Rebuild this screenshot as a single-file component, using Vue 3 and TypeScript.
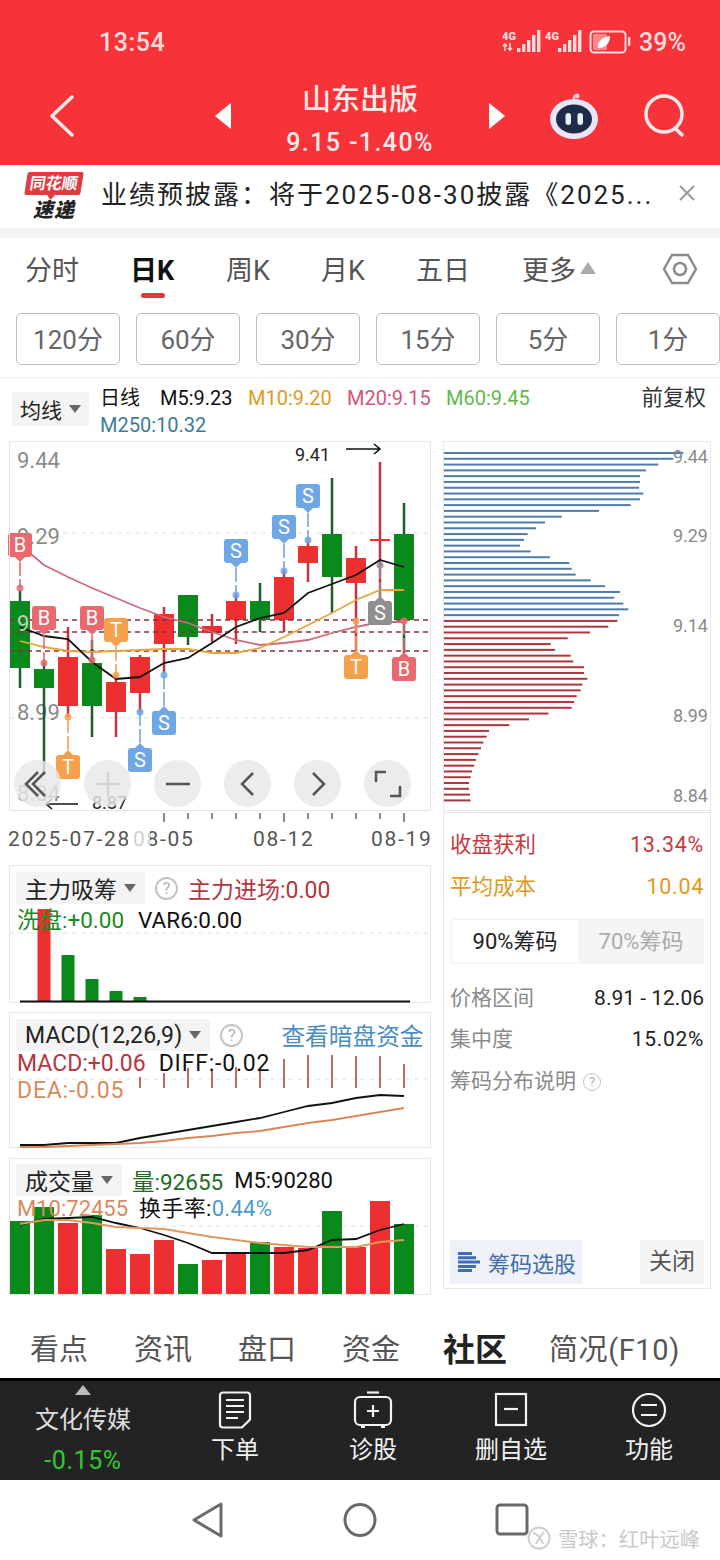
<template>
  <div class="page">
    <header class="top">
      <div class="status">
        <span class="clock">13:54</span>
        <svg class="status-icons" width="134" height="26" viewBox="502 29 134 26">
          <text x="502" y="40" class="net">4G</text>
          <path d="M505 44v7M503 46l2-2 2 2M510 43v7M508 48l2 2 2-2" stroke="#fbdcdc" stroke-width="1.6" fill="none" />
          <rect v-for="(h, i) in signal" :key="'a' + i" :x="517 + i * 5" :y="52 - h" width="3.4" :height="h" fill="#fbdcdc" />
          <text x="545" y="40" class="net">4G</text>
          <rect v-for="(h, i) in signal" :key="'b' + i" :x="558 + i * 5" :y="52 - h" width="3.4" :height="h" fill="#fbdcdc" />
          <rect x="590.5" y="31.5" width="35" height="21" rx="3.5" fill="none" stroke="#fbdcdc" stroke-width="2" />
          <rect x="593" y="34" width="14" height="16" rx="1.5" fill="#f58c8c" />
          <path d="M598 48c-1-7 5-11 12-12 0 8-5 12-12 12z" fill="#fff" />
          <rect x="628" y="37" width="2.4" height="9" rx="1" fill="#fbdcdc" />
        </svg>
        <span class="battery-text">39%</span>
      </div>
      <div class="nav">
        <svg class="back" width="30" height="44" viewBox="0 0 30 44"><path d="M25 3 5 22l20 19" fill="none" stroke="#fde9e9" stroke-width="3.5" stroke-linecap="round" stroke-linejoin="round" /></svg>
        <svg width="20" height="26" viewBox="0 0 20 26"><path d="M18 0v26L2 13z" fill="#fff" /></svg>
        <div class="title-box">
          <div class="title">山东出版</div>
          <div class="subtitle">9.15 -1.40%</div>
        </div>
        <svg width="20" height="26" viewBox="0 0 20 26"><path d="M2 0v26l16-13z" fill="#fff" /></svg>
        <div class="nav-right">
          <svg width="52" height="48" viewBox="0 0 52 48">
            <path d="M26 9C25 4 27 2 29 4" fill="none" stroke="#f6c8d8" stroke-width="2" />
            <circle cx="29" cy="4" r="2.5" fill="#f6c8d8" />
            <ellipse cx="26" cy="27" rx="24" ry="20" fill="#ece6fb" />
            <ellipse cx="26" cy="27" rx="18" ry="14.5" fill="#1e2b49" />
            <rect x="17.5" y="21" width="5.5" height="12" rx="2.7" fill="#e8eefc" />
            <rect x="29.5" y="21" width="5.5" height="12" rx="2.7" fill="#e8eefc" />
          </svg>
          <svg width="50" height="50" viewBox="0 0 50 50">
            <circle cx="24" cy="23" r="18" fill="none" stroke="#fde9e9" stroke-width="3.5" />
            <path d="M35 37l7 7" stroke="#fde9e9" stroke-width="3.5" stroke-linecap="round" />
          </svg>
        </div>
      </div>
    </header>

    <div class="notice">
      <div class="logo">
        <span class="logo-top">同花顺</span>
        <span class="logo-bottom">速递</span>
      </div>
      <span class="notice-text">业绩预披露：将于2025-08-30披露《2025...</span>
      <svg width="18" height="18" viewBox="0 0 18 18"><path d="M2 2l14 14M16 2 2 16" stroke="#9a9a9a" stroke-width="2" /></svg>
    </div>

    <nav class="periods">
      <span>分时</span>
      <span class="period-active">日K</span>
      <span>周K</span>
      <span>月K</span>
      <span>五日</span>
      <span class="more">更多<i class="tri-up"></i></span>
      <svg class="hex" width="34" height="32" viewBox="0 0 34 32">
        <path d="M9 2h16l8 14-8 14H9L1 16z" fill="none" stroke="#8a8a8a" stroke-width="2.5" stroke-linejoin="round" />
        <circle cx="17" cy="16" r="6" fill="none" stroke="#8a8a8a" stroke-width="2.5" />
      </svg>
    </nav>

    <div class="minutes">
      <span v-for="m in minutes" :key="m" class="minute">{{ m }}</span>
    </div>

    <div class="legend">
      <span class="select legend-select">均线<i class="tri-down"></i></span>
      <div class="legend-lines">
        <div class="legend-row">
          <span class="black legend-day">日线</span>
          <span class="black legend-m5">M5:9.23</span>
          <span class="m10">M10:9.20</span>
          <span class="m20">M20:9.15</span>
          <span class="m60">M60:9.45</span>
          <span class="fq">前复权</span>
        </div>
        <div class="m250">M250:10.32</div>
      </div>
    </div>

    <div class="charts">
      <div class="col-left">
        <div class="kline">
          <svg width="422" height="370" viewBox="9 441 422 370" class="block">
            <line x1="9" x2="431" y1="533" y2="533" class="grid" />
            <line x1="9" x2="431" y1="718" y2="718" class="grid" />
            <text v-for="l in yLabels" :key="l.t" x="17" :y="l.y" class="axis">{{ l.t }}</text>
            <g v-for="(c, i) in candles" :key="i">
              <line :x1="xAt(i)" :x2="xAt(i)" :y1="c.hi" :y2="c.lo" :stroke="wick(c.up)" stroke-width="2.5" />
              <rect :x="xAt(i) - 10" :y="c.open" width="20" :height="c.close - c.open" :fill="c.up ? RED : GREEN" />
            </g>
            <line v-for="y in [620, 632, 651]" :key="y" x1="9" x2="431" :y1="y" :y2="y" class="price-line" />
            <polyline :points="line(maPink, 440)" class="ma" stroke="#cf6a7e" />
            <polyline :points="line(maYellow, 440)" class="ma" stroke="#e8a53a" />
            <polyline :points="line(maBlack, 440)" class="ma" stroke="#111" />
            <text x="17" y="631" class="axis nine">9</text>
            <g v-for="(m, i) in marks" :key="'m' + i">
              <line :x1="m.x" :x2="m.x" :y1="m.y" :y2="m.dot" :stroke="m.color" stroke-width="2" stroke-dasharray="14 3" opacity="0.8" />
              <circle :cx="m.x" :cy="m.dot" r="3.5" :fill="m.color" opacity="0.85" />
              <rect :x="m.x - 12" :y="m.y - 12" width="24" height="24" rx="3" :fill="m.color" />
              <path :d="pointer(m)" :fill="m.color" />
              <text :x="m.x" :y="m.y + 7" class="mark-text">{{ m.t }}</text>
            </g>
            <text x="295" y="461" class="price-note">9.41</text>
            <path d="M346 449h34M374 444l6 5-6 5" class="arrow" />
            <text x="92" y="809" class="price-note">8.87</text>
            <path d="M78 804H45M52 799l-6 5 6 5" class="arrow" />
          </svg>
          <div class="kline-tools">
            <span class="tool"><svg width="30" height="30" viewBox="0 0 30 30"><path d="M15 3 3 15l12 12M22 3 10 15l12 12" class="tool-line" /></svg></span>
            <span class="tool"><svg width="30" height="30" viewBox="0 0 30 30"><path d="M15 3v24M3 15h24" class="tool-line pale" /></svg></span>
            <span class="tool"><svg width="30" height="30" viewBox="0 0 30 30"><path d="M3 15h24" class="tool-line" /></svg></span>
            <span class="tool"><svg width="30" height="30" viewBox="0 0 30 30"><path d="M20 4 9 15l11 11" class="tool-line" /></svg></span>
            <span class="tool"><svg width="30" height="30" viewBox="0 0 30 30"><path d="M10 4l11 11-11 11" class="tool-line" /></svg></span>
            <span class="tool"><svg width="30" height="30" viewBox="0 0 30 30"><path d="M3 13V3h10M27 17v10H17" class="tool-line" /></svg></span>
          </div>
        </div>

        <svg width="422" height="54" viewBox="9 811 422 54" class="block date-axis">
          <line v-for="x in dateTicks" :key="x" :x1="x" :x2="x" y1="813" :y2="x === 284 || x === 164 || x === 404 ? 822 : 819" stroke="#666" stroke-width="1.5" />
          <text x="8" y="846" class="date">2025-07-28</text>
          <text x="133" y="846" class="date">08-05</text>
          <rect x="128" y="812" width="22" height="40" fill="#fff" opacity="0.72" />
          <text x="253" y="846" class="date">08-12</text>
          <text x="371" y="846" class="date">08-19</text>
        </svg>

        <section class="sub sub-flow">
          <svg class="sub-svg" width="422" height="138" viewBox="9 865 422 138">
            <line x1="9" x2="431" y1="933" y2="933" class="grid" />
            <rect v-for="b in flowBars" :key="b.x" :x="b.x - 6.5" :y="b.y" width="13" :height="1001 - b.y" :fill="b.red ? RED : GREEN" />
            <line x1="20" x2="410" y1="1001.5" y2="1001.5" stroke="#111" stroke-width="2" />
          </svg>
          <div class="sub-head">
            <span class="select">主力吸筹<i class="tri-down"></i></span>
            <i class="help">?</i>
            <span class="c-red head-gap">主力进场:0.00</span>
          </div>
          <div class="sub-line line-flow">
            <span class="c-green">洗盘:+0.00</span>
            <span class="black var6">VAR6:0.00</span>
          </div>
        </section>

        <section class="sub sub-macd">
          <svg class="sub-svg" width="422" height="136" viewBox="9 1012 422 136">
            <line x1="9" x2="431" y1="1079" y2="1079" class="grid" />
            <line v-for="(t, i) in macdTops" :key="i" :x1="xAt(i + 5)" :x2="xAt(i + 5)" :y1="t" y2="1088" stroke="#b5404a" stroke-width="1.6" />
            <polyline :points="line(macdBlack, 0)" class="ma" stroke="#111" />
            <polyline :points="line(macdOrange, 0)" class="ma" stroke="#d9855a" />
          </svg>
          <div class="sub-head">
            <span class="select macd-select">MACD(12,26,9)<i class="tri-down"></i></span>
            <i class="help">?</i>
            <span class="dark-link">查看暗盘资金</span>
          </div>
          <div class="sub-line line-macd">
            <span class="c-red">MACD:+0.06</span>
            <span class="black diff">DIFF:-0.02</span>
          </div>
          <div class="sub-line line-dea"><span class="c-orange">DEA:-0.05</span></div>
        </section>

        <section class="sub sub-vol">
          <svg class="sub-svg" width="422" height="137" viewBox="9 1158 422 137">
            <line x1="9" x2="431" y1="1226" y2="1226" class="grid" />
            <rect v-for="(t, i) in volTops" :key="i" :x="xAt(i) - 10" :y="t" width="20" :height="1294 - t" :fill="candles[i].up ? RED : GREEN" />
            <polyline :points="line(volBlack, 0)" class="ma" stroke="#111" />
            <polyline :points="line(volOrange, 0)" class="ma" stroke="#e0995a" />
          </svg>
          <div class="sub-head">
            <span class="select">成交量<i class="tri-down"></i></span>
            <span class="c-dgreen vol-now">量:92655</span>
            <span class="black vol-m5">M5:90280</span>
          </div>
          <div class="sub-line line-vol">
            <span class="c-orange">M10:72455</span>
            <span class="black turnover">换手率:<em class="c-blue">0.44%</em></span>
          </div>
        </section>
      </div>

      <div class="col-right">
        <div class="chips">
          <svg width="268" height="370" viewBox="443 441 268 370" class="block">
            <rect v-for="(w, i) in chips" :key="i" x="443" :y="452 + i * 5.79" :width="w / 3 - 3" height="2" :fill="i < 29 ? '#4d7dab' : '#b0343d'" />
            <text v-for="l in chipLabels" :key="l.t" x="708" :y="l.y" class="axis chip-label">{{ l.t }}</text>
          </svg>
        </div>
        <div class="stats">
          <div class="stat-row stat-profit">
            <span class="c-profit">收盘获利</span><span class="c-profit wide">13.34%</span>
          </div>
          <div class="stat-row stat-cost">
            <span class="c-gold">平均成本</span><span class="c-gold wide">10.04</span>
          </div>
          <div class="chip-tabs">
            <span class="chip-tab chip-tab-on">90%筹码</span>
            <span class="chip-tab">70%筹码</span>
          </div>
          <div class="stat-row info first-info"><span class="muted">价格区间</span><span>8.91 - 12.06</span></div>
          <div class="stat-row info"><span class="muted">集中度</span><span class="wide">15.02%</span></div>
          <div class="stat-row info explain"><span class="muted">筹码分布说明<i class="help small">?</i></span></div>
          <div class="stat-actions">
            <span class="pick">
              <svg width="22" height="20" viewBox="0 0 22 20"><path d="M0 0h14v3H0zM0 4.3h18v3H0zM0 8.6h22v3H0zM0 12.9h18v3H0zM0 17h14v3H0z" fill="#3f6eb4" /></svg>
              筹码选股
            </span>
            <span class="close-btn">关闭</span>
          </div>
        </div>
      </div>
    </div>

    <nav class="bottom-tabs">
      <span>看点</span>
      <span>资讯</span>
      <span>盘口</span>
      <span>资金</span>
      <span class="tab-on">社区</span>
      <span class="tab-f10">简况(F10)</span>
    </nav>

    <div class="dock">
      <div class="dock-sector">
        <i class="sector-tri"></i>
        <span class="sector-name">文化传媒</span>
        <span class="sector-pct">-0.15%</span>
      </div>
      <div class="dock-item">
        <svg width="34" height="38" viewBox="0 0 34 38">
          <path d="M5 1.5h24a3 3 0 0 1 3 3v24l-8 8H5a3 3 0 0 1-3-3v-29a3 3 0 0 1 3-3z" class="dock-line" />
          <path d="M8 9h18M8 15h18M8 21h18M8 27h12" class="dock-line" />
        </svg>
        <span>下单</span>
      </div>
      <div class="dock-item">
        <svg width="40" height="38" viewBox="0 0 40 38">
          <path d="M14 1.5h12" class="dock-line" />
          <rect x="2" y="6" width="36" height="28" rx="5" class="dock-line" />
          <path d="M20 14v12M14 20h12M8 36h4M28 36h4" class="dock-line" />
        </svg>
        <span>诊股</span>
      </div>
      <div class="dock-item">
        <svg width="34" height="38" viewBox="0 0 34 38">
          <rect x="2" y="3" width="30" height="31" class="dock-line" />
          <path d="M10 18h14" class="dock-line" />
        </svg>
        <span>删自选</span>
      </div>
      <div class="dock-item">
        <svg width="36" height="38" viewBox="0 0 36 38">
          <circle cx="18" cy="19" r="16" class="dock-line" />
          <path d="M10 14h16M10 24h16" class="dock-line" />
        </svg>
        <span>功能</span>
      </div>
    </div>

    <div class="system-nav">
      <svg width="34" height="38" viewBox="0 0 34 38"><path d="M30 3 3 19l27 16z" class="sys-line" /></svg>
      <svg width="34" height="38" viewBox="0 0 34 38"><ellipse cx="17" cy="19" rx="15" ry="15.5" class="sys-line" /></svg>
      <svg width="34" height="38" viewBox="0 0 34 38"><rect x="2" y="4" width="30" height="29" rx="3" class="sys-line" /></svg>
    </div>

    <div class="watermark">
      <svg width="24" height="24" viewBox="0 0 24 24">
        <circle cx="12" cy="12" r="10.5" fill="none" stroke="#cfcfcf" stroke-width="2" />
        <path d="M6 7c5 1 8 6 10 11M17 6c-3 3-6 7-8 12" stroke="#cfcfcf" stroke-width="2" fill="none" />
      </svg>
      <span>雪球：红叶远峰</span>
    </div>
  </div>
</template>

<script setup lang="ts">
interface Candle {
  up: boolean
  open: number
  close: number
  hi: number
  lo: number
}

interface Mark {
  t: string
  x: number
  y: number
  dot: number
  color: string
}

const RED = '#ee2f2f'
const GREEN = '#0a8a1c'
const BUY = '#e8696f'
const SELL = '#6ea6e6'
const TAKE = '#f5a04c'

const signal = [4, 8, 12, 17, 22]
const minutes = ['120分', '60分', '30分', '15分', '5分', '1分']

const candles: Candle[] = [
  { up: false, open: 601, close: 668, hi: 590, lo: 688 },
  { up: false, open: 669, close: 688, hi: 660, lo: 775 },
  { up: true, open: 657, close: 706, hi: 627, lo: 717 },
  { up: false, open: 663, close: 706, hi: 640, lo: 737 },
  { up: true, open: 682, close: 712, hi: 675, lo: 737 },
  { up: true, open: 657, close: 693, hi: 655, lo: 712 },
  { up: true, open: 614, close: 644, hi: 607, lo: 673 },
  { up: false, open: 595, close: 637, hi: 595, lo: 645 },
  { up: true, open: 626, close: 633, hi: 614, lo: 642 },
  { up: true, open: 601, close: 620, hi: 594, lo: 644 },
  { up: false, open: 601, close: 620, hi: 583, lo: 632 },
  { up: true, open: 577, close: 620, hi: 570, lo: 632 },
  { up: true, open: 546, close: 563, hi: 540, lo: 582 },
  { up: false, open: 534, close: 577, hi: 478, lo: 613 },
  { up: true, open: 558, close: 583, hi: 546, lo: 653 },
  { up: true, open: 539, close: 541, hi: 462, lo: 597 },
  { up: false, open: 534, close: 620, hi: 503, lo: 653 }
]

const marks: Mark[] = [
  { t: 'B', x: 20, y: 545, dot: 588, color: BUY },
  { t: 'B', x: 44, y: 618, dot: 663, color: BUY },
  { t: 'B', x: 92, y: 618, dot: 660, color: BUY },
  { t: 'T', x: 116, y: 630, dot: 675, color: TAKE },
  { t: 'T', x: 68, y: 767, dot: 717, color: TAKE },
  { t: 'S', x: 140, y: 760, dot: 712, color: SELL },
  { t: 'S', x: 164, y: 723, dot: 675, color: SELL },
  { t: 'S', x: 236, y: 551, dot: 595, color: SELL },
  { t: 'S', x: 284, y: 527, dot: 571, color: SELL },
  { t: 'S', x: 308, y: 496, dot: 540, color: SELL },
  { t: 'T', x: 356, y: 667, dot: 621, color: TAKE },
  { t: 'S', x: 380, y: 613, dot: 565, color: '#8f8f8f' },
  { t: 'B', x: 404, y: 669, dot: 621, color: BUY }
]

const yLabels = [
  { t: '9.44', y: 468 },
  { t: '9.29', y: 544 },
  { t: '8.99', y: 720 },
  { t: '8.84', y: 801 }
]
const chipLabels = [
  { t: '9.44', y: 463 },
  { t: '9.29', y: 542 },
  { t: '9.14', y: 632 },
  { t: '8.99', y: 722 },
  { t: '8.84', y: 802 }
]

const maBlack = [187, 196, 199, 222, 239, 237, 223, 218, 203, 187, 178, 173, 153, 144, 135, 120, 127]
const maYellow = [201, 207, 211, 212, 211, 210, 209, 209, 213, 213, 208, 197, 185, 173, 160, 150, 150]
const maPink = [105, 125, 137, 148, 158, 168, 177, 183, 192, 200, 205, 203, 200, 193, 187, 182, 182]

const flowBars = [
  { x: 44, y: 909, red: true },
  { x: 68, y: 955, red: false },
  { x: 92, y: 979, red: false },
  { x: 116, y: 991, red: false },
  { x: 140, y: 997, red: false }
]

const macdTops = [1077, 1073, 1068, 1070, 1067, 1068, 1059, 1055, 1055, 1056, 1056, 1064]
const macdBlack = [1145, 1145, 1143, 1143, 1143, 1138, 1134, 1130, 1126, 1122, 1118, 1112, 1106, 1103, 1098, 1095, 1096]
const macdOrange = [1147, 1147, 1146, 1145, 1144, 1143, 1141, 1138, 1136, 1133, 1131, 1127, 1123, 1120, 1116, 1112, 1108]

const volTops = [1221, 1207, 1223, 1215, 1249, 1254, 1240, 1264, 1260, 1253, 1242, 1247, 1248, 1211, 1247, 1201, 1224]
const volBlack = [1225, 1219, 1218, 1217, 1223, 1228, 1235, 1243, 1253, 1253, 1253, 1253, 1250, 1240, 1239, 1230, 1224]
const volOrange = [1224, 1220, 1220, 1223, 1227, 1228, 1229, 1233, 1237, 1240, 1243, 1245, 1247, 1247, 1247, 1242, 1240]

const chips = [
  730, 700, 655, 618, 600, 600, 597, 610, 600, 572, 477, 365, 315, 288, 263, 252, 240, 272, 330, 388, 395, 407, 452, 495, 540, 523, 550, 565, 537,
  532, 505, 450, 383, 332, 345, 392, 400, 432, 432, 442, 427, 422, 410, 402, 395, 325, 267, 208, 147, 140, 130, 123, 115, 108, 103, 96, 92, 87, 87, 90, 92
]

const dateTicks = [164, 188, 212, 236, 260, 284, 308, 332, 356, 380, 404]

const xAt = (i: number) => 20 + i * 24
const line = (ys: number[], base: number) => ys.map((y, i) => `${xAt(i)},${y + base}`).join(' ')
const wick = (up: boolean) => (up ? '#c9303a' : '#1f5a2c')

// little tip on the label, on the side the stem leaves from
const pointer = (m: Mark) => {
  const dir = m.dot > m.y ? 1 : -1
  const edge = m.y + dir * 12
  return `M${m.x - 5} ${edge}L${m.x} ${edge + dir * 5}L${m.x + 5} ${edge}Z`
}
</script>

<style scoped>
.page {
  position: relative;
  width: 720px;
  height: 1560px;
  overflow: hidden;
  background: #fff;
  font-family: Roboto, "Noto Sans CJK SC", sans-serif;
  color: #222;
}

.block {
  display: block;
}

i,
em {
  font-style: normal;
}

.top {
  height: 165px;
  background: #f7333a;
  color: #fdeaea;
}

.status {
  display: flex;
  align-items: center;
  box-sizing: border-box;
  height: 76px;
  padding-top: 8px;
  padding-left: 99px;
}

.clock {
  width: 403px;
  font-size: 25px;
  font-weight: 500;
  letter-spacing: 0.6px;
  color: #fbdcdc;
}

.net {
  font-size: 11px;
  font-weight: 900;
  fill: #fbdcdc;
}

.battery-text {
  margin-left: 3px;
  font-size: 25px;
  font-weight: 500;
  color: #fbdcdc;
}

.nav {
  display: grid;
  grid-template-columns: 213px 20px 254px 20px 1fr;
  grid-template-rows: 80px;
  align-items: center;
  height: 80px;
}

.back {
  margin-left: 47px;
}

.title-box {
  margin-top: 9px;
  text-align: center;
}

.title {
  font-size: 29px;
  font-weight: 500;
  line-height: 42px;
}

.subtitle {
  margin-top: 2px;
  font-size: 25px;
  font-weight: 500;
  line-height: 40px;
  letter-spacing: 1.4px;
  white-space: pre;
}

.nav-right {
  display: flex;
  align-items: center;
  gap: 40px;
  padding-left: 41px;
}

.notice {
  display: flex;
  align-items: center;
  box-sizing: content-box;
  height: 55px;
  padding-bottom: 8px;
  padding-left: 25px;
  border-bottom: 10px solid #f5f5f5;
}

.logo {
  display: flex;
  flex-direction: column;
  align-items: center;
  width: 58px;
  margin-top: 8px;
  margin-right: 18px;
}

.logo-top {
  position: relative;
  width: 56px;
  background: #e23a3f;
  color: #fff;
  font-size: 16px;
  font-weight: 700;
  line-height: 23px;
  text-align: center;
  border-radius: 2px;
  white-space: nowrap;
  transform: skewX(-9deg);
}

.logo-top::after {
  content: '';
  position: absolute;
  left: 23px;
  top: 23px;
  border-left: 4px solid transparent;
  border-right: 4px solid transparent;
  border-top: 5px solid #e23a3f;
}

.logo-bottom {
  margin-top: 3px;
  font-size: 20px;
  font-weight: 900;
  font-style: italic;
  line-height: 24px;
  letter-spacing: 1px;
  color: #222;
}

.notice-text {
  width: 577px;
  font-size: 26px;
  letter-spacing: 2px;
  color: #222;
  white-space: nowrap;
}

.periods {
  position: relative;
  display: grid;
  grid-template-columns: 105px 96px 95px 95px 106px 1fr;
  align-items: center;
  box-sizing: border-box;
  height: 66px;
  padding-left: 25px;
  padding-bottom: 6px;
  font-size: 27px;
  color: #555;
}

.period-active {
  position: relative;
  font-weight: 700;
  color: #111;
}

.period-active::after {
  content: '';
  position: absolute;
  left: 11px;
  top: 44px;
  width: 24px;
  height: 5px;
  border-radius: 3px;
  background: #e8343c;
}

.more {
  display: flex;
  align-items: center;
}

.tri-up {
  margin-left: 4px;
  border-left: 8px solid transparent;
  border-right: 8px solid transparent;
  border-bottom: 12px solid #aaa;
}

.hex {
  position: absolute;
  left: 663px;
  top: 15px;
}

.minutes {
  display: flex;
  gap: 16px;
  height: 52px;
  margin-top: 9px;
  padding-left: 16px;
  padding-bottom: 12px;
  border-bottom: 1px solid #eee;
}

.minute {
  flex: 0 0 104px;
  box-sizing: border-box;
  border: 1px solid #bdbdbd;
  border-radius: 5px;
  font-size: 26px;
  line-height: 52px;
  text-align: center;
  color: #666;
}

.legend {
  display: flex;
  height: 63px;
  padding-left: 12px;
  font-size: 20px;
}

.select {
  display: inline-flex;
  align-items: center;
  height: 32px;
  padding: 0 9px;
  background: #f4f4f4;
  font-size: 23px;
  color: #222;
}

.legend-select {
  height: 34px;
  margin-top: 14px;
  padding: 0 8px;
  font-size: 21px;
}

.tri-down {
  margin-left: 7px;
  border-left: 6px solid transparent;
  border-right: 6px solid transparent;
  border-top: 8px solid #666;
}

.legend-lines {
  margin-left: 11px;
  padding-top: 6px;
}

.legend-row {
  display: flex;
  width: 606px;
  line-height: 28px;
  white-space: nowrap;
}

.black {
  color: #111;
}

.legend-day {
  width: 60px;
}

.legend-m5 {
  width: 88px;
}

.m10 {
  width: 99px;
  color: #dd9a1f;
}

.m20 {
  width: 99px;
  color: #d4557a;
}

.m60 {
  flex: 1;
  color: #62b84a;
}

.fq {
  font-size: 21.5px;
  color: #333;
}

.m250 {
  line-height: 26px;
  color: #3c7c9c;
}

.charts {
  display: flex;
  gap: 12px;
  padding-left: 9px;
}

.col-left {
  width: 422px;
}

.kline {
  position: relative;
  width: 422px;
  height: 370px;
  outline: 1px solid #e4e4e4;
  outline-offset: -1px;
}

.kline svg,
.date-axis {
  overflow: visible;
}

.grid {
  stroke: #e0e0e0;
  stroke-width: 1;
  stroke-dasharray: 5 4;
}

.axis {
  font-size: 22px;
  fill: #8a8a8a;
}

.nine {
  fill: #b7d4b9;
}

.price-line {
  stroke: #8b2e3c;
  stroke-width: 1.4;
  stroke-dasharray: 5 4;
}

.ma {
  fill: none;
  stroke-width: 1.8;
}

.mark-text {
  font-size: 20px;
  text-anchor: middle;
  fill: #fff;
}

.price-note {
  font-size: 18px;
  fill: #222;
}

.arrow {
  fill: none;
  stroke: #111;
  stroke-width: 1.6;
}

.kline-tools {
  position: absolute;
  left: 5px;
  top: 319px;
  display: flex;
  gap: 23px;
}

.tool {
  display: flex;
  align-items: center;
  justify-content: center;
  width: 47px;
  height: 47px;
  border-radius: 50%;
  background: rgba(232, 232, 232, 0.82);
}

.tool-line {
  fill: none;
  stroke: #555;
  stroke-width: 2.5;
}

.pale {
  stroke: #d2d2d2;
}

.date {
  font-size: 21px;
  letter-spacing: 1.7px;
  fill: #555;
}

.sub {
  position: relative;
  box-sizing: border-box;
  width: 422px;
  outline: 1px solid #e6e6e6;
  outline-offset: -1px;
  font-size: 23px;
  padding: 6px 0 0 7px;
  white-space: nowrap;
}

.sub-svg {
  position: absolute;
  left: 0;
  top: 0;
}

.sub-head,
.sub-line {
  position: relative;
  display: flex;
  align-items: center;
}

.sub-flow {
  height: 138px;
}

.sub-macd {
  height: 136px;
  margin-top: 9px;
}

.sub-vol {
  height: 137px;
  margin-top: 10px;
}

.help {
  display: inline-block;
  box-sizing: border-box;
  width: 23px;
  height: 23px;
  margin-left: 10px;
  border: 2px solid #c4c4c4;
  border-radius: 50%;
  font-size: 16px;
  line-height: 19px;
  text-align: center;
  color: #b0b0b0;
}

.help.small {
  width: 18px;
  height: 18px;
  margin-left: 7px;
  border-width: 1.5px;
  font-size: 13px;
  line-height: 15px;
  vertical-align: 2px;
}

.head-gap {
  margin-left: 10px;
}

.c-red {
  color: #b5363e;
}

.c-green {
  color: #1c8a24;
}

.c-dgreen {
  color: #1f6b24;
}

.c-orange {
  color: #d98a5c;
}

.c-blue {
  color: #4a9ccf;
}

.line-flow {
  margin: 2px 0 0 1px;
  font-size: 22.5px;
  line-height: 26px;
}

.var6 {
  margin-left: 14px;
}

.macd-select {
  letter-spacing: 0.2px;
}

.dark-link {
  margin-left: 38px;
  font-size: 23.7px;
  color: #4a8cc4;
}

.line-macd {
  margin: -1px 0 0 1px;
  line-height: 26px;
}

.diff {
  margin-left: 13px;
  letter-spacing: 0.8px;
}

.line-dea {
  margin-left: 1px;
  line-height: 28px;
  letter-spacing: 0.8px;
}

.vol-now {
  margin-left: 10px;
  font-size: 22.5px;
}

.vol-m5 {
  margin-left: 11px;
  font-size: 22px;
}

.line-vol {
  margin: 0 0 0 1px;
  font-size: 22px;
  line-height: 26px;
}

.turnover {
  margin-left: 11px;
  letter-spacing: 0.3px;
}

.col-right {
  width: 268px;
}

.chips {
  height: 370px;
  outline: 1px solid #e8e8e8;
  outline-offset: -1px;
}

.chip-label {
  font-size: 18px;
  text-anchor: end;
}

.stats {
  box-sizing: border-box;
  height: 477px;
  margin-top: 1px;
  padding: 19px 7px 0;
  outline: 1px solid #e8e8e8;
  outline-offset: -1px;
}

.stat-row {
  display: flex;
  justify-content: space-between;
  font-size: 21px;
}

.wide {
  letter-spacing: 0.7px;
}

.stat-profit {
  line-height: 28px;
  font-size: 21.5px;
}

.stat-cost {
  margin-top: 14px;
  line-height: 28px;
  font-size: 21.5px;
}

.c-profit {
  color: #c8393f;
}

.c-gold {
  color: #e09a1c;
}

.chip-tabs {
  display: flex;
  height: 46px;
  margin-top: 17px;
  padding: 2px;
  box-sizing: border-box;
  background: #f5f5f5;
}

.chip-tab {
  flex: 0 0 126px;
  font-size: 22px;
  line-height: 44px;
  text-align: center;
  color: #aaa;
}

.chip-tab-on {
  background: #fff;
  color: #222;
}

.info {
  margin-top: 13px;
  line-height: 28px;
  color: #222;
}

.first-info {
  margin-top: 20px;
}

.explain {
  margin-top: 14px;
}

.muted {
  color: #8a8a8a;
}

.stat-actions {
  display: flex;
  justify-content: space-between;
  margin-top: 145px;
}

.pick {
  display: flex;
  align-items: center;
  gap: 8px;
  width: 132px;
  height: 44px;
  box-sizing: border-box;
  padding-left: 8px;
  background: #eef1f8;
  font-size: 22px;
  white-space: nowrap;
  color: #3f6ea8;
}

.close-btn {
  width: 64px;
  height: 44px;
  background: #f5f5f5;
  font-size: 23px;
  line-height: 44px;
  text-align: center;
  color: #555;
}

.bottom-tabs {
  display: grid;
  grid-template-columns: 104px 104px 104px 101px 106px 1fr;
  align-items: center;
  position: absolute;
  left: 0;
  right: 0;
  top: 1313px;
  height: 68px;
  padding-left: 30px;
  font-size: 29px;
  color: #555;
}

.tab-on {
  font-size: 32px;
  font-weight: 700;
  color: #222;
}

.tab-f10 {
  letter-spacing: 0.6px;
  white-space: nowrap;
}

.dock {
  position: absolute;
  left: 0;
  right: 0;
  top: 1378px;
  display: grid;
  grid-template-columns: 166px repeat(4, 138px);
  height: 102px;
  box-sizing: border-box;
  border-top: 3px solid #000;
  background: #232323;
  color: #f2f2f2;
}

.dock-sector {
  display: flex;
  flex-direction: column;
  align-items: center;
  padding-top: 4px;
}

.sector-tri {
  border-left: 8px solid transparent;
  border-right: 8px solid transparent;
  border-bottom: 10px solid #bbb;
}

.sector-name {
  margin-top: 6px;
  font-size: 24px;
  line-height: 38px;
  color: #ddd;
}

.sector-pct {
  margin-top: 7px;
  font-size: 25px;
  letter-spacing: 0.6px;
  line-height: 30px;
  color: #32c832;
}

.dock-item {
  display: flex;
  flex-direction: column;
  align-items: center;
  padding-top: 10px;
  font-size: 24px;
  line-height: 36px;
}

.dock-item svg {
  margin-bottom: 3px;
}

.dock-line {
  fill: none;
  stroke: #f2f2f2;
  stroke-width: 2.2;
}

.system-nav {
  position: absolute;
  left: 0;
  right: 0;
  top: 1480px;
  display: flex;
  justify-content: center;
  gap: 118px;
  align-items: center;
  height: 80px;
}

.sys-line {
  fill: none;
  stroke: #6a6a6a;
  stroke-width: 3;
  stroke-linejoin: round;
}

.watermark {
  position: absolute;
  left: 527px;
  top: 1523px;
  display: flex;
  align-items: center;
  gap: 7px;
  font-size: 20.3px;
  color: #c8c8c8;
  white-space: nowrap;
}
</style>
